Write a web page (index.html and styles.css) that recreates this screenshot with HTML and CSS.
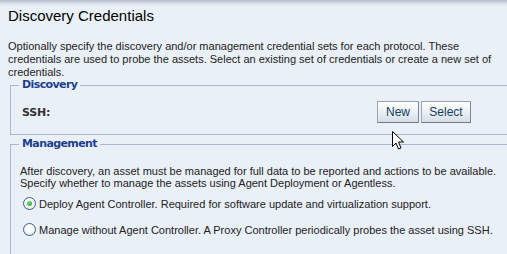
FILE: index.html
```html
<!DOCTYPE html>
<html>
<head>
<meta charset="utf-8">
<link rel="stylesheet" href="styles.css">
</head>
<body>
<div class="page">
  <div class="topbar"></div>
  <h1 class="title">Discovery Credentials</h1>
  <p class="intro">Optionally specify the discovery and/or management credential sets for each protocol. These<br>credentials are used to probe the assets. Select an existing set of credentials or create a new set of<br>credentials.</p>
  <fieldset class="group discovery">
    <legend class="group-legend">Discovery</legend>
    <div class="cred-row">
      <span class="cred-label">SSH:</span>
      <div class="btns">
        <button class="btn btn-new">New</button>
        <button class="btn btn-select">Select</button>
      </div>
    </div>
  </fieldset>
  <fieldset class="group management">
    <legend class="group-legend">Management</legend>
    <p class="mgmt-text">After discovery, an asset must be managed for full data to be reported and actions to be available. Specify whether to manage the assets using Agent Deployment or Agentless.</p>
    <label class="radio-row first"><span class="radio checked"></span><span class="radio-text">Deploy Agent Controller. Required for software update and virtualization support.</span></label>
    <label class="radio-row second"><span class="radio"></span><span class="radio-text">Manage without Agent Controller. A Proxy Controller periodically probes the asset using SSH.</span></label>
  </fieldset>
  <svg class="cursor" width="13" height="20" viewBox="0 0 13 20"><path d="M0.5 0.5 L0.5 15.5 L4 12 L6.5 18 L9 17 L6.5 11 L11.5 11 Z" fill="#fff" stroke="#000" stroke-width="1"/></svg>
</div>
</body>
</html>
```

FILE: styles.css
```css
html, body {
  margin: 0;
  padding: 0;
}
body {
  background: #eaf0f8;
  width: 507px;
  height: 254px;
  overflow: hidden;
  font-family: "DejaVu Sans", Tahoma, sans-serif;
  color: #111;
}
.page {
  position: relative;
  width: 507px;
  height: 254px;
  overflow: hidden;
}
.topbar {
  height: 7px;
  background: linear-gradient(#b4bcc9, #dfe6ef 60%, #eaf0f8);
}
.title {
  margin: 0 0 0 8px;
  font-family: "Liberation Sans", Arial, sans-serif;
  font-size: 15px;
  font-weight: normal;
  line-height: 18px;
  height: 18px;
  color: #000;
}
.intro {
  margin: 15px 0 0 8px;
  width: 495px;
  font-family: "Liberation Sans", Arial, sans-serif;
  font-size: 11px;
  line-height: 13px;
  color: #222;
}
.group {
  margin: 0 -40px 0 10px;
  border: 1px solid #b0b6c8;
  border-right: none;
  padding: 0 8px;
}
.group-legend {
  padding: 0 3px;
  font-size: 11px;
  font-weight: bold;
  letter-spacing: -0.6px;
  line-height: 14px;
  color: #1d3f8a;
}
.discovery {
  margin-top: -1px;
  height: 55px;
}
.cred-row {
  display: flex;
  align-items: center;
  width: 452px;
  margin-top: 9px;
}
.cred-label {
  padding-left: 3px;
  font-size: 11px;
  font-weight: bold;
  letter-spacing: -0.2px;
  color: #333;
}
.btns {
  margin-left: auto;
  display: flex;
  gap: 2px;
}
.btn {
  height: 22px;
  padding: 0;
  border: 1px solid #9aa5b4;
  border-right-color: #7a8796;
  border-bottom-color: #6d7a8a;
  background: linear-gradient(#ffffff, #e8edf3 60%, #d6dde6);
  font-family: "Liberation Sans", Arial, sans-serif;
  font-size: 12px;
  color: #123d60;
}
.btn-new { width: 42px; }
.btn-select { width: 50px; }
.management {
  margin-top: 2px;
  height: 200px;
}
.mgmt-text {
  margin: 14px 0 0 1px;
  width: 478px;
  font-family: "Liberation Sans", Arial, sans-serif;
  font-size: 11px;
  line-height: 12px;
  color: #222;
}
.radio-row {
  display: flex;
  align-items: center;
  margin-left: 4px;
  font-family: "Liberation Sans", Arial, sans-serif;
  font-size: 11px;
  color: #222;
}
.radio-row.first { margin-top: 8px; }
.radio-row.second { margin-top: 13px; }
.radio {
  box-sizing: border-box;
  width: 13px;
  height: 13px;
  border-radius: 50%;
  border: 1px solid #3c5f8a;
  background: radial-gradient(circle at 50% 40%, #ffffff 30%, #d8dde4 100%);
  margin-right: 3px;
  flex: none;
  position: relative;
}
.radio.checked::after {
  content: "";
  position: absolute;
  left: 3px;
  top: 3px;
  width: 5px;
  height: 5px;
  border-radius: 50%;
  background: radial-gradient(circle at 40% 40%, #6fe06a, #1f9a27);
}
.radio-text { white-space: nowrap; }
.cursor {
  position: absolute;
  left: 392px;
  top: 131px;
}
```
